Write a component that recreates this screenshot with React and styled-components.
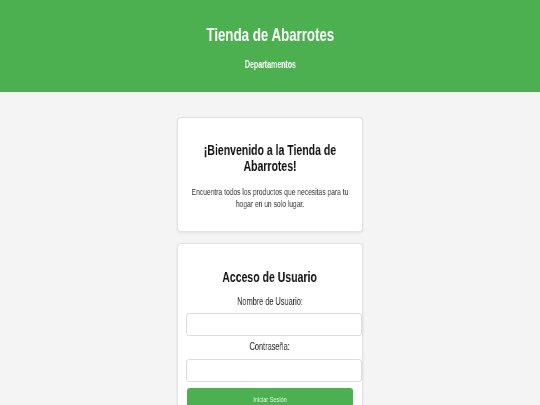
import React from "react";
import styled, { createGlobalStyle } from "styled-components";

const SQUEEZE = 0.7;

const Global = createGlobalStyle`
  body {
    margin: 0;
    background: #f4f4f4;
    font-family: "Liberation Sans", Arial, sans-serif;
    color: #111;
    -webkit-font-smoothing: antialiased;
  }
`;

// the reference text is horizontally condensed
const Line = styled.span`
  display: inline-block;
  white-space: nowrap;
  transform: scaleX(${SQUEEZE});
  will-change: transform;
`;

const Block = styled.div`
  width: calc(100% / ${SQUEEZE});
  transform: scaleX(${SQUEEZE});
  transform-origin: 0 0;
  will-change: transform;
  text-align: center;
`;

const Header = styled.header`
  background: #4caf50;
  color: #fff;
  height: 92px;
  display: flex;
  flex-direction: column;
  align-items: center;
  padding-top: 24px;
  box-sizing: border-box;
  h1 {
    margin: 0;
    font-size: 19px;
    line-height: 22px;
    font-weight: bold;
  }
  nav {
    margin-top: 13px;
    font-size: 10px;
    font-weight: bold;
  }
`;

const Main = styled.main`
  display: flex;
  flex-direction: column;
  align-items: center;
  gap: 11px;
  padding-top: 25px;
`;

const Card = styled.section`
  width: 186px;
  box-sizing: border-box;
  background: #fff;
  border: 1px solid #e2e2e2;
  border-radius: 4px;
  box-shadow: 0 1px 3px rgba(0, 0, 0, 0.08);
  padding: ${(p) => p.$pad || "24px 9px 21px"};
  text-align: center;
  h2 {
    margin: 0;
    font-size: 15px;
    line-height: 16px;
    font-weight: bold;
  }
  p {
    margin: 12px 0 0;
    font-size: 9.6px;
    line-height: 12px;
    color: #333;
  }
`;

const Label = styled.label`
  display: block;
  font-size: 10.5px;
  line-height: 11px;
  color: #222;
  margin: ${(p) => p.$top || "5px"} 0 ${(p) => p.$bottom || "7px"};
`;

const Input = styled.input`
  display: block;
  width: 100%;
  height: 12px;
  padding: 4px 4px 5px;
  border: 1px solid #ddd;
  border-radius: 3px;
  background: #fff;
  box-sizing: content-box;
  margin-left: -1px;
`;

const Button = styled.button`
  display: flex;
  align-items: center;
  justify-content: center;
  width: 100%;
  height: 22px;
  margin-top: 6px;
  padding: 0;
  background: #4caf50;
  color: #e6f4e6;
  border: none;
  border-radius: 3px;
  font-family: inherit;
  font-size: 8px;
`;

export default function App() {
  return (
    <>
      <Global />
      <Header>
        <h1><Line>Tienda de Abarrotes</Line></h1>
        <nav><Line>Departamentos</Line></nav>
      </Header>
      <Main>
        <Card>
          <h2><Block>¡Bienvenido a la Tienda de Abarrotes!</Block></h2>
          <p><Block>Encuentra todos los productos que necesitas para tu hogar en un solo lugar.</Block></p>
        </Card>
        <Card $pad="25px 9px 20px">
          <h2><Line>Acceso de Usuario</Line></h2>
          <Label $top="11px" $bottom="6px"><Line>Nombre de Usuario:</Line></Label>
          <Input type="text" />
          <Label><Line>Contraseña:</Line></Label>
          <Input type="password" />
          <Button><Line>Iniciar Sesión</Line></Button>
        </Card>
      </Main>
    </>
  );
}
